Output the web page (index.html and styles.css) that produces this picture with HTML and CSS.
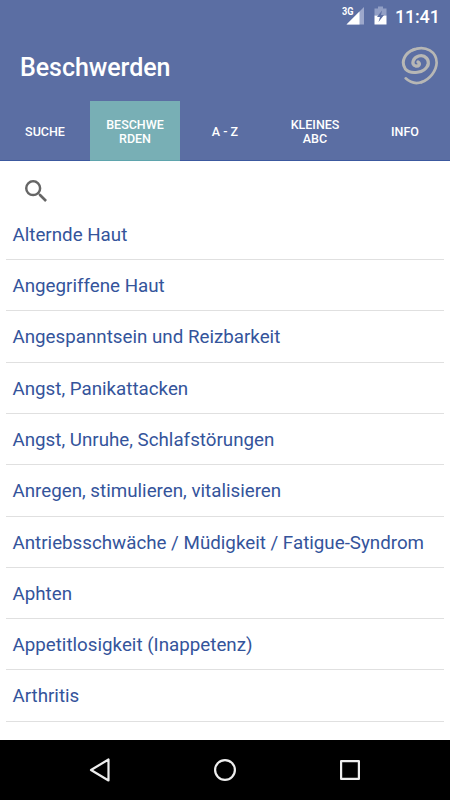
FILE: index.html
```
<!DOCTYPE html>
<html lang="de">

<head>
  <meta charset="UTF-8">
  <meta name="viewport" content="width=device-width, initial-scale=1.0">
  <title>Beschwerden</title>
  <link rel="stylesheet" href="styles.css">
</head>

<body>
  <header>
    <div class="status-bar">
      <svg class="signal" width="22" height="19" viewBox="0 0 22 19">
        <path d="M22 1V18.500H4.500z" fill="#9da8cb" />
        <path d="M17.500 5.500V18.500H4.500z" fill="#fff" />
        <path d="M0 0h12.500v10H0z" fill="#5b6ea3" />
        <text x="0" y="8.500" textLength="11.500" lengthAdjust="spacingAndGlyphs">3G</text>
      </svg>
      <svg class="battery" width="13" height="19" viewBox="0 0 13 19">
        <path d="M4 .5h5v2h3.500v7H.5v-7H4z" fill="#929fc5" />
        <path d="M.5 9.500h12v9H.5z" fill="#fff" />
        <path d="M8 4.500L3 11h3L4.500 16l5.500-7H7z" fill="#5b6ea3" />
      </svg>
      <span class="clock">11:41</span>
    </div>
    <div class="title-bar">
      <h1>Beschwerden</h1>
      <svg class="logo" width="40" height="42" viewBox="210 135 120 126">
        <path class="core" d="M264 186C273 192 266 200 257 198C242 194 249 173 266 168C286 163 300 180 293 198" />
        <path d="M293 196C284 219 242 225 226 207C211 184 225 158 253 148" />
        <path class="thin" d="M248 150C289 133 320 158 320 188C319 214 299 238 274 247" />
        <path class="thin" d="M227 235C240 247 257 253 276 246" />
      </svg>
    </div>
    <nav class="tabs">
      <a class="tab">SUCHE</a>
      <a class="tab active">BESCHWE<br>RDEN</a>
      <a class="tab">A - Z</a>
      <a class="tab">KLEINES<br>ABC</a>
      <a class="tab">INFO</a>
    </nav>
  </header>

  <main>
    <div class="search">
      <svg width="22" height="22" viewBox="3 3 17.5 17.5">
        <path d="M15.5 14h-.79l-.28-.27A6.47 6.47 0 0 0 16 9.500 6.500 6.500 0 1 0 9.500 16c1.610 0 3.090-.590 4.230-1.570l.270.280v.790l5 4.990L20.490 19l-4.990-5zm-6 0C7.010 14 5 11.990 5 9.500S7.010 5 9.500 5 14 7.010 14 9.500 11.990 14 9.500 14z" />
      </svg>
    </div>
    <ul class="list">
      <li>Alternde Haut</li>
      <li>Angegriffene Haut</li>
      <li>Angespanntsein und Reizbarkeit</li>
      <li>Angst, Panikattacken</li>
      <li>Angst, Unruhe, Schlafstörungen</li>
      <li>Anregen, stimulieren, vitalisieren</li>
      <li>Antriebsschwäche / Müdigkeit / Fatigue-Syndrom</li>
      <li>Aphten</li>
      <li>Appetitlosigkeit (Inappetenz)</li>
      <li>Arthritis</li>
    </ul>
  </main>

  <footer class="nav-bar">
    <svg width="24" height="26" viewBox="0 0 24 26">
      <path d="M20.500 2.500v21L3 13z" />
    </svg>
    <svg width="24" height="26" viewBox="0 0 24 26">
      <circle cx="12" cy="13" r="9.900" />
    </svg>
    <svg width="24" height="26" viewBox="0 0 24 26">
      <rect x="3.100" y="4.100" width="17.800" height="17.800" />
    </svg>
  </footer>
</body>

</html>
```

FILE: styles.css
```
:root {
  --primary: #5b6ea3;
  --primary-line: #3c599f;
  --accent: #78afb5;
  --text: #34549b;
}

* {
  box-sizing: border-box;
}

body {
  margin: 0;
  height: 100vh;
  display: flex;
  flex-direction: column;
  overflow: hidden;
  background: #fff;
  font-family: Roboto, sans-serif;
}

header {
  height: 161px;
  color: #fff;
  background: var(--primary);
}

.status-bar {
  height: 31px;
  padding: 0 10px 0 0;
  display: flex;
  justify-content: flex-end;
  align-items: center;
}

.signal {
  margin-right: 10px;
}

.signal text {
  font-size: 10.5px;
  font-weight: 700;
  fill: #fff;
}

.battery {
  margin-right: 8px;
}

.clock {
  width: 45px;
  font-size: 18px;
  font-weight: 500;
  line-height: 31px;
  letter-spacing: -0.2px;
  padding-top: 2px;
}

.title-bar {
  height: 70px;
  padding: 0 10px 0 20px;
  display: flex;
  justify-content: space-between;
  align-items: center;
}

h1 {
  margin: 2px 0 0;
  font-size: 25px;
  font-weight: 500;
  letter-spacing: -0.05px;
}

.logo {
  fill: none;
  stroke: #b7b7b5;
  stroke-width: 9;
  stroke-linecap: round;
}

.logo .core {
  stroke-width: 10;
}

.logo .thin {
  stroke-width: 8;
}

.tabs {
  height: 60px;
  display: grid;
  grid-template-columns: repeat(5, 1fr);
}

.tab {
  display: flex;
  justify-content: center;
  align-items: center;
  padding-top: 2px;
  border-bottom: 1px solid var(--primary-line);
  font-size: 12.5px;
  font-weight: 500;
  line-height: 14px;
  text-align: center;
}

.tab.active {
  background: var(--accent);
  border-color: #5fa5ad;
}

main {
  flex: 1;
  overflow: hidden;
}

.search {
  height: 47.8px;
  padding: 19px 0 0 25px;
}

.search svg {
  display: block;
  fill: #666;
}

.list {
  margin: 0;
  padding: 0 6px;
  list-style: none;
}

.list li {
  height: 51.3px;
  padding-left: 6.5px;
  border-bottom: 1px solid #e0e0e0;
  font-size: 18.75px;
  line-height: 53px;
  white-space: nowrap;
  color: var(--text);
}

.nav-bar {
  height: 60px;
  padding: 0 37px;
  display: flex;
  justify-content: space-around;
  align-items: center;
  background: #000;
}

.nav-bar svg {
  fill: none;
  stroke: #eee;
  stroke-width: 2.2;
  stroke-linejoin: round;
}
```
